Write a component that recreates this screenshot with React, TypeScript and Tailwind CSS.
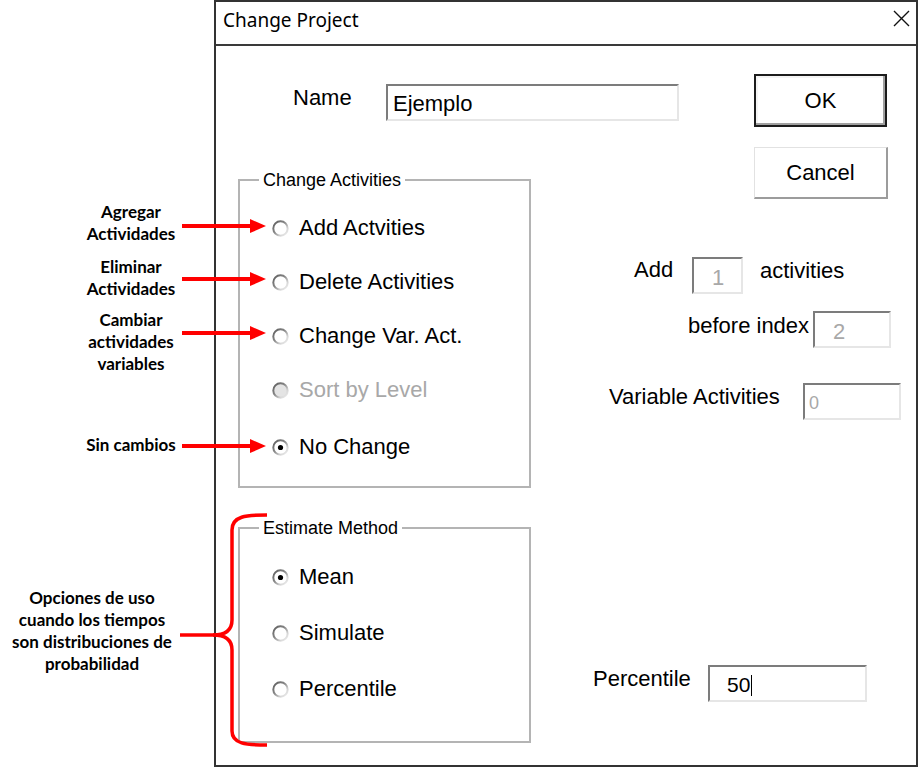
import React, { useId } from "react";

const dlgFont = { fontFamily: '"Liberation Sans", Arial, sans-serif' };
const annFont = { fontFamily: 'Lato, "Noto Sans", sans-serif' };

function Radio({ checked = false, disabled = false }: { checked?: boolean; disabled?: boolean }) {
  const id = useId().replace(/:/g, "");
  return (
    <svg width="17" height="17" viewBox="0 0 17 17" className="shrink-0">
      <defs>
        <linearGradient id={`g${id}`} x1="0" y1="0" x2="1" y2="1">
          <stop offset="0" stopColor="#5a5a5a" />
          <stop offset="0.45" stopColor="#8a8a8a" />
          <stop offset="0.75" stopColor="#d8d8d8" />
          <stop offset="1" stopColor="#f0f0f0" />
        </linearGradient>
      </defs>
      <circle cx="8.5" cy="8.5" r="7.2" fill={disabled ? "#e4e4e4" : "#ffffff"} stroke={`url(#g${id})`} strokeWidth="2" />
      {checked && <circle cx="8.5" cy="8.5" r="2.6" fill="#000" />}
    </svg>
  );
}

function RadioRow({ label, checked, disabled, h }: { label: string; checked?: boolean; disabled?: boolean; h: string }) {
  return (
    <div className={`flex items-center pl-[32px] ${h}`}>
      <Radio checked={checked} disabled={disabled} />
      <span className={`ml-[10px] text-[22px] leading-[26px] ${disabled ? "text-[#a8a8a8]" : "text-black"}`}>{label}</span>
    </div>
  );
}

const sunken =
  "border-t-2 border-l-2 border-t-[#7c7c7c] border-l-[#7c7c7c] border-b-2 border-r-2 border-b-[#e6e6e6] border-r-[#e6e6e6] bg-white";

export default function App() {
  return (
    <div className="relative w-[920px] h-[768px] bg-white overflow-hidden" style={dlgFont}>
      {/* Dialog */}
      <div className="ml-[214px] w-[704px] h-[767px] border-2 border-[#333333] flex flex-col">
        {/* Title bar */}
        <div className="h-[44px] border-b-2 border-[#3a3a3a] flex items-start justify-between shrink-0">
          <span
            className="pl-[7px] pt-[6px] text-[19px] leading-[24px] text-black"
            style={{ fontFamily: '"Noto Sans", "Open Sans", sans-serif' }}
          >
            Change Project
          </span>
          <svg width="17" height="17" viewBox="0 0 17 17" className="mt-[8px] mr-[6px]">
            <path d="M1 1 L16 16 M16 1 L1 16" stroke="#111" strokeWidth="1.4" />
          </svg>
        </div>

        {/* Row A: Name + OK */}
        <div className="flex items-start pt-[28px] shrink-0">
          <span className="ml-[77px] mt-[11px] w-[93px] text-[22px] leading-[26px] text-black">Name</span>
          <div className={`mt-[10px] w-[293px] h-[37px] ${sunken} flex items-center pl-[5px] pt-[2px] text-[22px] text-black`}>
            Ejemplo
          </div>
          <button
            className="ml-[75px] w-[133px] h-[53px] border-2 border-[#1c1c1c] bg-white shadow-[inset_-2px_-2px_0_#a0a0a0,inset_2px_2px_0_#f4f4f4] text-[22px] text-black flex items-center justify-center"
            style={dlgFont}
          >
            OK
          </button>
        </div>

        {/* Row B */}
        <div className="flex flex-1">
          {/* Left column */}
          <div className="w-[315px] pl-[22px] shrink-0">
            <fieldset className="mt-[42px] w-[293px] border-2 border-[#b4b4b4] pt-[10px] pb-[12px]">
              <legend className="ml-[19px] px-[4px] text-[18px] leading-[22px] text-black">Change Activities</legend>
              <RadioRow label="Add Actvities" h="h-[54px]" />
              <RadioRow label="Delete Activities" h="h-[54px]" />
              <RadioRow label="Change Var. Act." h="h-[54px]" />
              <RadioRow label="Sort by Level" disabled h="h-[54px]" />
              <div className="mt-[3px]">
                <RadioRow label="No Change" checked h="h-[54px]" />
              </div>
            </fieldset>
            <fieldset className="mt-[29px] w-[293px] border-2 border-[#b4b4b4] pt-[10px] pb-[24px]">
              <legend className="ml-[19px] px-[4px] text-[18px] leading-[22px] text-black">Estimate Method</legend>
              <RadioRow label="Mean" checked h="h-[56px]" />
              <RadioRow label="Simulate" h="h-[56px]" />
              <RadioRow label="Percentile" h="h-[56px]" />
            </fieldset>
          </div>

          {/* Right column */}
          <div className="flex-1 flex flex-col">
            <button
              className="mt-[20px] ml-[223px] w-[134px] h-[52px] bg-white border-t border-l border-t-[#e2e2e2] border-l-[#e2e2e2] border-b-2 border-r-2 border-b-[#9c9c9c] border-r-[#9c9c9c] text-[22px] text-black flex items-center justify-center"
              style={dlgFont}
            >
              Cancel
            </button>

            <div className="mt-[58px] ml-[103px] flex items-start">
              <span className="w-[58px] text-[22px] leading-[26px] text-black">Add</span>
              <div className={`w-[51px] h-[37px] ${sunken} flex items-center pl-[18px] pt-[3px] text-[22px] text-[#a8a8a8]`}>1</div>
              <span className="ml-[17px] mt-[1px] text-[22px] leading-[26px] text-black">activities</span>
            </div>

            <div className="mt-[17px] ml-[157px] flex items-start">
              <span className="w-[125px] mt-[2px] text-[22px] leading-[26px] text-black">before index</span>
              <div className={`w-[78px] h-[37px] ${sunken} flex items-center pl-[18px] pt-[3px] text-[22px] text-[#a8a8a8]`}>2</div>
            </div>

            <div className="mt-[35px] ml-[78px] flex items-start">
              <span className="w-[194px] mt-[1px] text-[22px] leading-[26px] text-black">Variable Activities</span>
              <div className={`w-[98px] h-[37px] ${sunken} flex items-center pl-[4px] pt-[3px] text-[18px] text-[#a8a8a8]`}>0</div>
            </div>

            <div className="mt-[245px] ml-[62px] flex items-start">
              <span className="w-[115px] mt-[1px] text-[22px] leading-[26px] text-black">Percentile</span>
              <div className={`w-[159px] h-[37px] ${sunken} flex items-center pl-[17px] pt-[3px] text-[21px] text-black`}>
                50
                <span className="ml-[1px] w-[1px] h-[21px] bg-black" />
              </div>
            </div>
          </div>
        </div>
      </div>

      {/* Annotation layer */}
      <svg className="absolute left-0 top-0 pointer-events-none" width="920" height="768" viewBox="0 0 920 768">
        {[226, 279, 333, 446].map((y) => (
          <g key={y}>
            <rect x="182" y={y - 2} width="70" height="4" fill="#ff0000" />
            <polygon points={`250,${y - 7} 266,${y} 250,${y + 7}`} fill="#ff0000" />
          </g>
        ))}
        <path
          d="M267 515 C246 515 232 516 232 530 L232 620 C232 630 226 635 213 635 C226 635 232 640 232 650 L232 731 C232 744 246 745 267 745"
          fill="none"
          stroke="#ff0000"
          strokeWidth="3.5"
        />
        <path d="M180 635 L214 635" stroke="#ff0000" strokeWidth="3.5" />
      </svg>

      <div className="absolute left-[71px] top-[201px] w-[120px] text-center font-bold text-[17px] leading-[21.5px] text-black" style={annFont}>
        Agregar
        <br />
        Actividades
      </div>
      <div className="absolute left-[71px] top-[256px] w-[120px] text-center font-bold text-[17px] leading-[21.5px] text-black" style={annFont}>
        Eliminar
        <br />
        Actividades
      </div>
      <div className="absolute left-[71px] top-[309px] w-[120px] text-center font-bold text-[17px] leading-[22px] text-black" style={annFont}>
        Cambiar
        <br />
        actividades
        <br />
        variables
      </div>
      <div className="absolute left-[71px] top-[434px] w-[120px] text-center font-bold text-[17px] leading-[22px] text-black" style={annFont}>
        Sin cambios
      </div>
      <div className="absolute left-[2px] top-[587px] w-[180px] text-center font-bold text-[17px] leading-[22px] text-black" style={annFont}>
        Opciones de uso
        <br />
        cuando los tiempos
        <br />
        son distribuciones de
        <br />
        probabilidad
      </div>
    </div>
  );
}
